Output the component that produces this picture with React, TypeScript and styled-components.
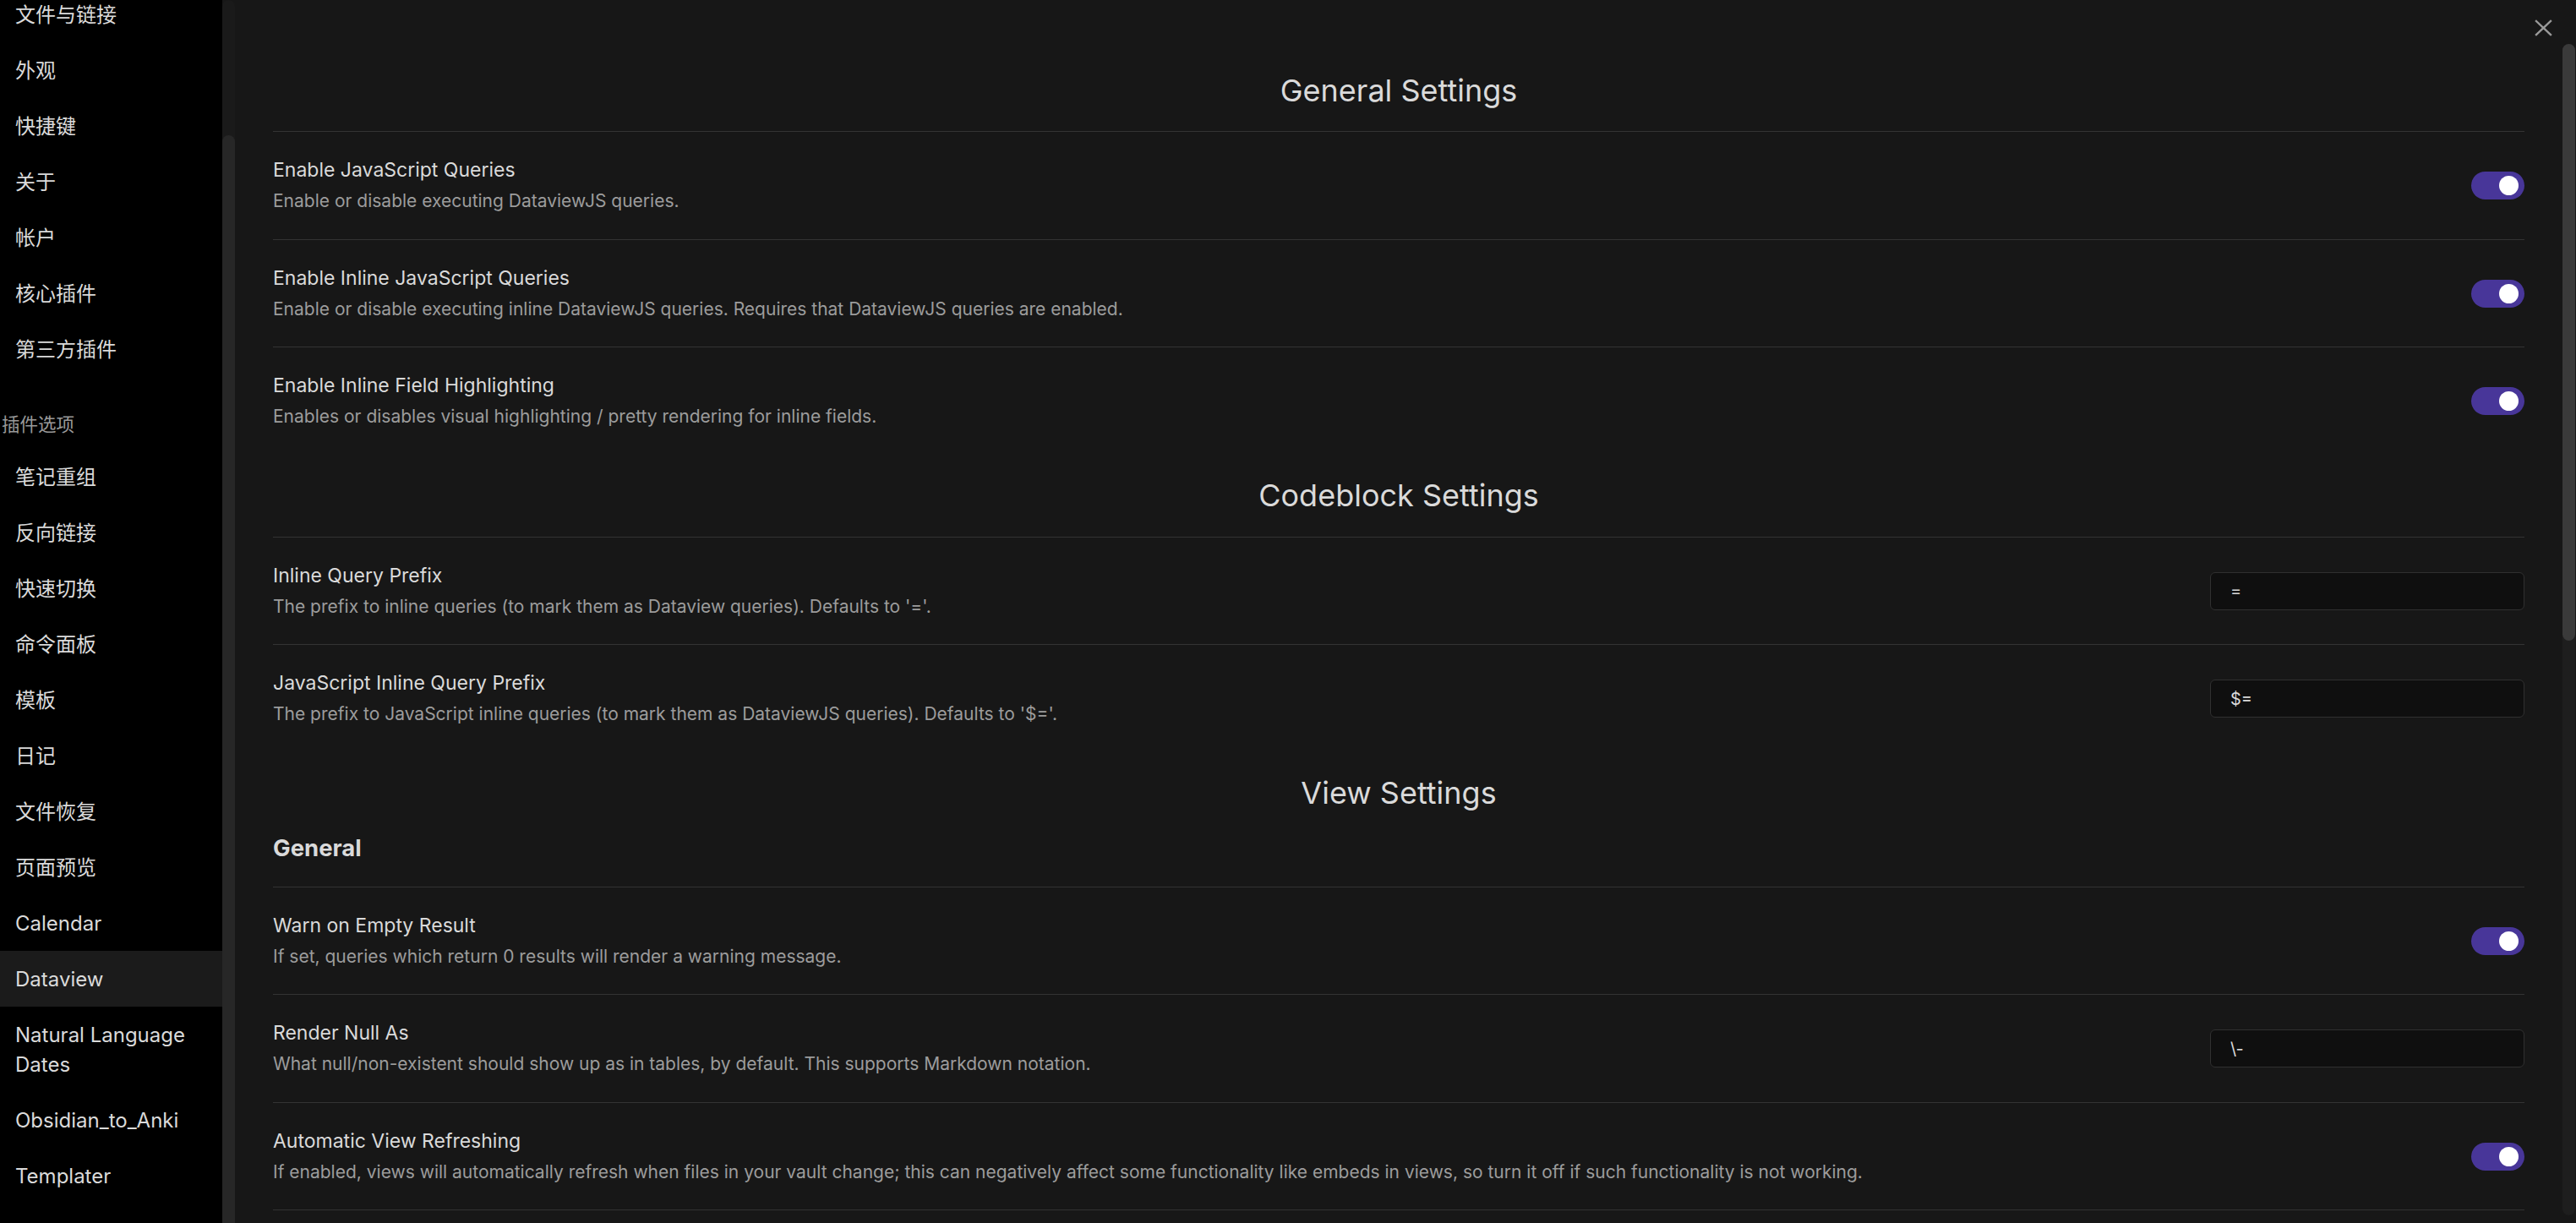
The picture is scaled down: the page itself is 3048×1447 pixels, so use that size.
import React from "react";
import styled, { createGlobalStyle } from "styled-components";

const GlobalStyle = createGlobalStyle`
  html, body {
    margin: 0;
    padding: 0;
    height: 100%;
    overflow: hidden;
    background: #171717;
  }
  body {
    font-family: Inter, "Noto Sans CJK SC", sans-serif;
    -webkit-font-smoothing: antialiased;
  }
  #root { height: 100%; }
  *, *::before, *::after { box-sizing: border-box; }
`;

const Shell = styled.div`
  position: relative;
  display: flex;
  height: 100vh;
  overflow: hidden;
  background: #171717;
`;

/* ---------- sidebar ---------- */

const Sidebar = styled.nav`
  flex: none;
  width: 263px;
  background: #000;
  overflow: hidden;
`;

const SideList = styled.div`
  display: flex;
  flex-direction: column;
  margin-top: -16px;
`;

const SideItem = styled.div<{ $active?: boolean }>`
  padding: 15.5px 16px 15.5px 18px;
  font-size: 24px;
  line-height: 35px;
  color: #dadada;
  background: ${(p) => (p.$active ? "#1b1b1b" : "transparent")};
`;

const SideGroupTitle = styled.div`
  padding: 41px 0 14px 2px;
  font-size: 21.5px;
  line-height: 30px;
  color: #999;
`;

const SideRail = styled.div`
  flex: none;
  width: 15px;
  display: flex;
  flex-direction: column;
  background: #171717;
`;

const SideTrack = styled.div`
  flex: 1;
  display: flex;
  flex-direction: column;
  padding-top: 160px;
  background: #1a1a1a;
  border-radius: 8px 8px 0 0;
`;

const SideThumb = styled.div`
  flex: 1;
  background: #272727;
  border-radius: 8px 8px 0 0;
`;

/* ---------- main ---------- */

const Main = styled.main`
  flex: 1;
  min-width: 0;
  display: flex;
`;

const Content = styled.div`
  flex: 1;
  min-width: 0;
  padding: 58px 45px 0;
  overflow: hidden;
`;

const MainRail = styled.div`
  flex: none;
  width: 15px;
  margin-right: 1px;
  padding: 52px 0 9px;
  display: flex;
  flex-direction: column;
`;

const MainTrack = styled.div`
  flex: 1;
  display: flex;
  flex-direction: column;
  background: #1e1e1e;
  border-radius: 8px;
`;

const MainThumb = styled.div`
  height: 706px;
  background: #3a3a3a;
  border-radius: 8px;
`;

const SectionHeading = styled.h2`
  margin: 0;
  padding: 26.5px 0;
  font-size: 36px;
  line-height: 44px;
  font-weight: 400;
  color: #dadada;
  text-align: center;
`;

const SubHeading = styled.h3`
  margin: 0;
  padding: 0 0 30px;
  font-size: 27.5px;
  line-height: 32px;
  font-weight: 700;
  color: #dadada;
`;

const Row = styled.div`
  display: flex;
  align-items: center;
  gap: 24px;
  padding: 31px 0 30.5px;
  border-top: 1px solid #333;

  &:last-child {
    border-bottom: 1px solid #333;
  }
`;

const Info = styled.div`
  flex: 1;
  min-width: 0;
`;

const Name = styled.div`
  margin-bottom: 7px;
  font-size: 23px;
  line-height: 29px;
  color: #dadada;
  white-space: nowrap;
`;

const Desc = styled.div`
  font-size: 21px;
  line-height: 29px;
  color: #9c9c9c;
  white-space: nowrap;
`;

const Toggle = styled.div<{ $on: boolean }>`
  flex: none;
  width: 63px;
  height: 33px;
  padding: 0 7px;
  display: flex;
  align-items: center;
  justify-content: ${(p) => (p.$on ? "flex-end" : "flex-start")};
  border-radius: 17px;
  background: ${(p) => (p.$on ? "#483699" : "#3f3f3f")};
`;

const Knob = styled.span`
  width: 23px;
  height: 23px;
  border-radius: 50%;
  background: #fff;
`;

const TextInput = styled.input`
  flex: none;
  width: 372px;
  height: 45px;
  padding: 0 23px;
  background: #0f0f0f;
  border: 1px solid #303030;
  border-radius: 6px;
  color: #dadada;
  font-family: Inter, sans-serif;
  font-size: 20px;
  outline: none;
`;

const CloseButton = styled.button`
  position: absolute;
  top: 23px;
  right: 28px;
  width: 21px;
  height: 20px;
  padding: 0;
  border: 0;
  background: none;
  color: #9a9a9a;
  display: flex;
  cursor: pointer;
`;

type Setting =
  | { kind: "toggle"; name: string; desc: string; on: boolean }
  | { kind: "text"; name: string; desc: string; value: string };

type Block =
  | { type: "h2"; text: string }
  | { type: "h3"; text: string }
  | { type: "setting"; setting: Setting };

const blocks: Block[] = [
  { type: "h2", text: "General Settings" },
  {
    type: "setting",
    setting: {
      kind: "toggle",
      name: "Enable JavaScript Queries",
      desc: "Enable or disable executing DataviewJS queries.",
      on: true,
    },
  },
  {
    type: "setting",
    setting: {
      kind: "toggle",
      name: "Enable Inline JavaScript Queries",
      desc: "Enable or disable executing inline DataviewJS queries. Requires that DataviewJS queries are enabled.",
      on: true,
    },
  },
  {
    type: "setting",
    setting: {
      kind: "toggle",
      name: "Enable Inline Field Highlighting",
      desc: "Enables or disables visual highlighting / pretty rendering for inline fields.",
      on: true,
    },
  },
  { type: "h2", text: "Codeblock Settings" },
  {
    type: "setting",
    setting: {
      kind: "text",
      name: "Inline Query Prefix",
      desc: "The prefix to inline queries (to mark them as Dataview queries). Defaults to '='.",
      value: "=",
    },
  },
  {
    type: "setting",
    setting: {
      kind: "text",
      name: "JavaScript Inline Query Prefix",
      desc: "The prefix to JavaScript inline queries (to mark them as DataviewJS queries). Defaults to '$='.",
      value: "$=",
    },
  },
  { type: "h2", text: "View Settings" },
  { type: "h3", text: "General" },
  {
    type: "setting",
    setting: {
      kind: "toggle",
      name: "Warn on Empty Result",
      desc: "If set, queries which return 0 results will render a warning message.",
      on: true,
    },
  },
  {
    type: "setting",
    setting: {
      kind: "text",
      name: "Render Null As",
      desc: "What null/non-existent should show up as in tables, by default. This supports Markdown notation.",
      value: "\\-",
    },
  },
  {
    type: "setting",
    setting: {
      kind: "toggle",
      name: "Automatic View Refreshing",
      desc: "If enabled, views will automatically refresh when files in your vault change; this can negatively affect some functionality like embeds in views, so turn it off if such functionality is not working.",
      on: true,
    },
  },
];

const coreItems = ["文件与链接", "外观", "快捷键", "关于", "帐户", "核心插件", "第三方插件"];
const pluginItems = [
  "笔记重组",
  "反向链接",
  "快速切换",
  "命令面板",
  "模板",
  "日记",
  "文件恢复",
  "页面预览",
  "Calendar",
  "Dataview",
  "Natural Language Dates",
  "Obsidian_to_Anki",
  "Templater",
];

function SettingRow({ setting }: { setting: Setting }) {
  return (
    <Row>
      <Info>
        <Name>{setting.name}</Name>
        <Desc>{setting.desc}</Desc>
      </Info>
      {setting.kind === "toggle" ? (
        <Toggle $on={setting.on}>
          <Knob />
        </Toggle>
      ) : (
        <TextInput type="text" defaultValue={setting.value} spellCheck={false} />
      )}
    </Row>
  );
}

export default function App() {
  return (
    <>
      <GlobalStyle />
      <Shell>
        <Sidebar>
          <SideList>
            {coreItems.map((t) => (
              <SideItem key={t}>{t}</SideItem>
            ))}
            <SideGroupTitle>插件选项</SideGroupTitle>
            {pluginItems.map((t) => (
              <SideItem key={t} $active={t === "Dataview"}>
                {t}
              </SideItem>
            ))}
          </SideList>
        </Sidebar>
        <SideRail>
          <SideTrack>
            <SideThumb />
          </SideTrack>
        </SideRail>
        <Main>
          <Content>
            {blocks.map((b, i) => {
              if (b.type === "h2") return <SectionHeading key={i}>{b.text}</SectionHeading>;
              if (b.type === "h3") return <SubHeading key={i}>{b.text}</SubHeading>;
              return <SettingRow key={i} setting={b.setting} />;
            })}
          </Content>
          <MainRail>
            <MainTrack>
              <MainThumb />
            </MainTrack>
          </MainRail>
        </Main>
        <CloseButton aria-label="Close">
          <svg width="21" height="20" viewBox="0 0 21 20" fill="none" stroke="currentColor" strokeWidth="2.4" strokeLinecap="square">
            <line x1="2" y1="2" x2="19" y2="18" />
            <line x1="19" y1="2" x2="2" y2="18" />
          </svg>
        </CloseButton>
      </Shell>
    </>
  );
}
